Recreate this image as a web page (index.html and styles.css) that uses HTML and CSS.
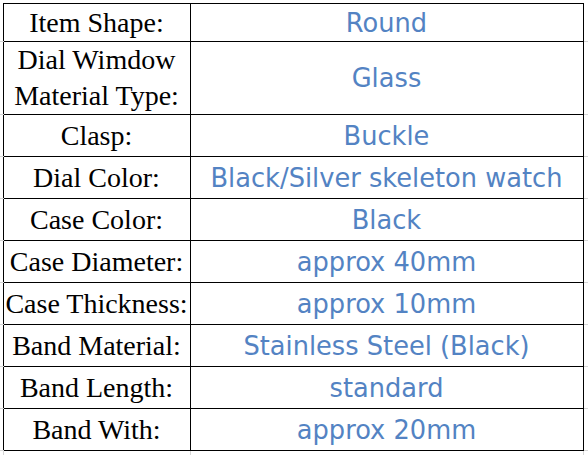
FILE: index.html
```html
<!DOCTYPE html>
<html>
<head>
<meta charset="utf-8">
<link rel="stylesheet" href="styles.css">
</head>
<body>
<table class="spec">
  <colgroup>
    <col class="c-edge-l">
    <col class="c-label">
    <col class="c-value">
    <col class="c-edge-r">
  </colgroup>
  <tr class="r-first"><td class="edge"></td><td class="label">Item Shape:</td><td class="value">Round</td><td class="edge"></td></tr>
  <tr class="r-tall"><td class="edge"></td><td class="label">Dial Wimdow<br>Material Type:</td><td class="value">Glass</td><td class="edge"></td></tr>
  <tr class="r"><td class="edge"></td><td class="label">Clasp:</td><td class="value">Buckle</td><td class="edge"></td></tr>
  <tr class="r"><td class="edge"></td><td class="label">Dial Color:</td><td class="value">Black/Silver skeleton watch</td><td class="edge"></td></tr>
  <tr class="r"><td class="edge"></td><td class="label">Case Color:</td><td class="value">Black</td><td class="edge"></td></tr>
  <tr class="r"><td class="edge"></td><td class="label">Case Diameter:</td><td class="value">approx 40mm</td><td class="edge"></td></tr>
  <tr class="r"><td class="edge"></td><td class="label">Case Thickness:</td><td class="value">approx 10mm</td><td class="edge"></td></tr>
  <tr class="r"><td class="edge"></td><td class="label">Band Material:</td><td class="value">Stainless Steel (Black)</td><td class="edge"></td></tr>
  <tr class="r"><td class="edge"></td><td class="label">Band Length:</td><td class="value">standard</td><td class="edge"></td></tr>
  <tr class="r"><td class="edge"></td><td class="label">Band With:</td><td class="value">approx 20mm</td><td class="edge"></td></tr>
  <tr class="r-tail"><td class="edge"></td><td class="tail"></td><td class="tail"></td><td class="edge"></td></tr>
</table>
</body>
</html>
```

FILE: styles.css
```css
html, body {
  margin: 0;
  padding: 0;
  background: #ffffff;
}

.spec {
  border-collapse: collapse;
  table-layout: fixed;
  width: 588px;
  margin-top: 3px;
}

.c-edge-l { width: 3px; }
.c-label { width: 187px; }
.c-value { width: 393px; }
.c-edge-r { width: 5px; }

.spec td {
  padding: 0;
  text-align: center;
  vertical-align: middle;
  white-space: nowrap;
}

.spec td.label,
.spec td.value {
  border: 1px solid #000000;
}

.spec td.edge {
  border-bottom: 1px solid #d6d6d6;
}

.label {
  font-family: "Liberation Serif", "Times New Roman", serif;
  font-size: 28px;
  line-height: 36px;
  color: #000000;
  padding-top: 4px;
}

.value {
  font-family: "DejaVu Sans", sans-serif;
  font-size: 25.7px;
  color: #5383c3;
}

.r-first { height: 38px; }
.r-tall { height: 73px; }
.r { height: 42px; }
.r-tail { height: 5px; }

.spec td.tail {
  border-left: 1px solid #d6d6d6;
  border-right: 1px solid #d6d6d6;
}
.spec .r-tail td.edge {
  border-bottom: none;
}
```
